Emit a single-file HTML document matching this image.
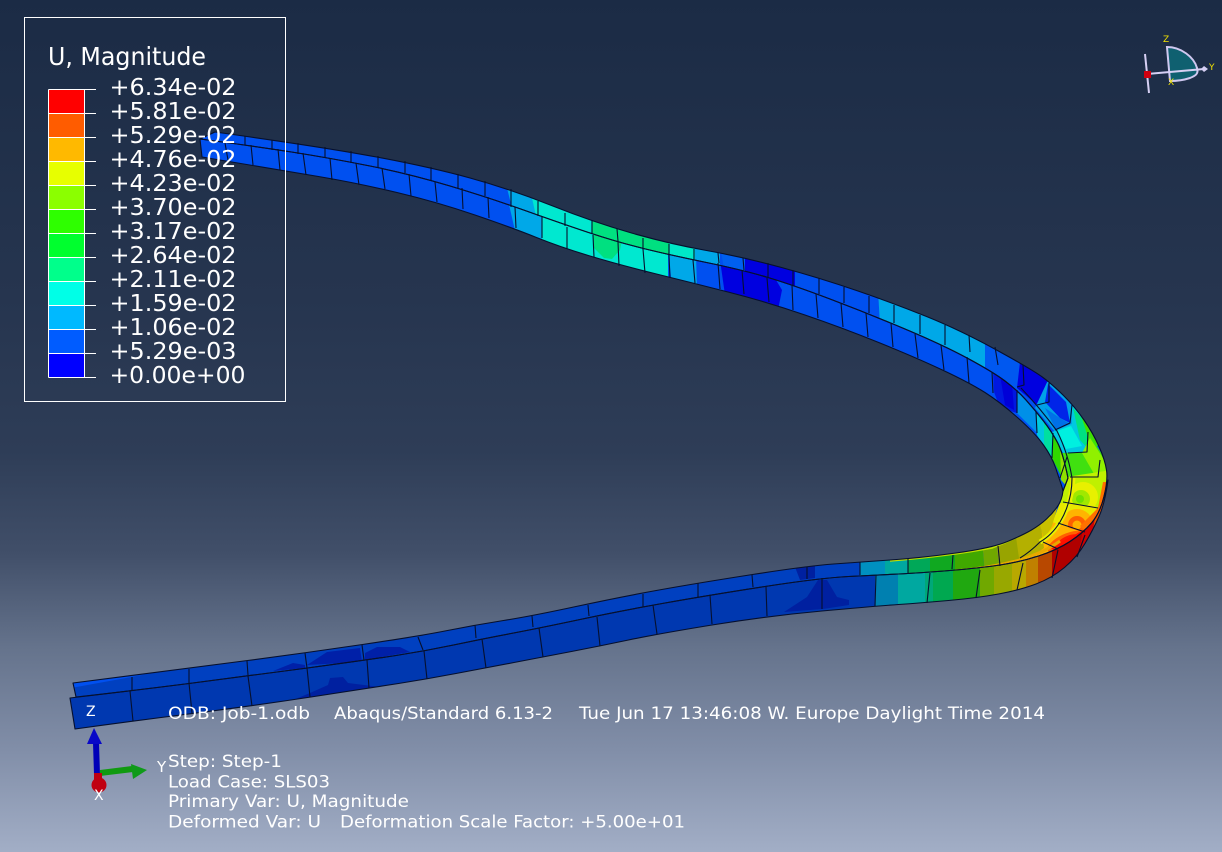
<!DOCTYPE html>
<html><head><meta charset="utf-8"><title>Abaqus U, Magnitude</title>
<style>html,body{margin:0;padding:0;background:#1b2b45;width:1222px;height:852px;overflow:hidden}svg{display:block}text{font-family:"DejaVu Sans","Liberation Sans",sans-serif;fill:#fff}</style>
</head><body>
<svg width="1222" height="852" viewBox="0 0 1222 852" xmlns="http://www.w3.org/2000/svg">
<defs>
<linearGradient id="bg" x1="0" y1="0" x2="0" y2="852" gradientUnits="userSpaceOnUse">
<stop offset="0" stop-color="#1b2b45"/><stop offset=".35" stop-color="#26354f"/><stop offset=".53" stop-color="#2e3d57"/><stop offset=".65" stop-color="#414f69"/><stop offset=".76" stop-color="#65738c"/><stop offset=".88" stop-color="#818ea8"/><stop offset="1" stop-color="#a2aec6"/>
</linearGradient>
<path id="pA" d="M215,132 Q323,147 376.5,157 Q430,167 470,178 Q510,189 551.5,205.5 Q593,222 631.5,233 Q670,244 706.5,250.5 Q743,257 781.5,267.5 Q820,278 856.5,290.5 Q893,303 926.5,316.5 Q960,330 996.5,350 Q1033,370 1043,377.5 Q1053,385 1064,396 Q1075,407 1084,420 Q1093,433 1099,446.5 Q1105,460 1106.5,470 Q1108,480 1104,496.5 Q1100,513 1091.5,523 Q1083,533 1070,541.5 Q1057,550 1038.5,556 Q1020,562 1000,565 Q980,568 950,570.5 Q920,573 898.5,574 Q877,575 848.5,576.5 Q820,578 765,586.5 Q710,595 665,603 Q620,611 580,619.5 Q540,628 511,633.5 Q482,639 453.5,645 Q425,651 396,655.5 Q367,660 307.5,668 Q248,676 189,683.5 Q130,691 76,697 L73,683 Q190,668 247.5,660.5 Q305,653 362.5,644.5 Q420,636 447.5,630.5 Q475,625 503.5,620.5 Q532,616 576,606.5 Q620,597 659,590 Q698,583 752.5,574.5 Q807,566 833.5,564 Q860,562 890,560 Q920,558 956,553 Q992,548 1007.5,541.5 Q1023,535 1031.5,530 Q1040,525 1046.5,519 Q1053,513 1057.5,506.5 Q1062,500 1063,491 L1068,478 Q1063,453 1057.5,442.5 Q1052,432 1043.5,421 Q1035,410 1026,400 Q1017,390 1005,381 Q993,372 968,358.5 Q943,345 905,329 Q867,313 830,299 Q793,285 768,277.5 Q743,270 706.5,262.5 Q670,255 643.5,248.5 Q617,242 588.5,232.5 Q560,223 525,210.5 Q490,198 450,186 Q410,174 370,166 Q330,158 291.5,152 Q253,146 200,139 Z"/>
<path id="pB" d="M200,139 Q253,146 291.5,152 Q330,158 370,166 Q410,174 450,186 Q490,198 525,210.5 Q560,223 588.5,232.5 Q617,242 643.5,248.5 Q670,255 706.5,262.5 Q743,270 768,277.5 Q793,285 830,299 Q867,313 905,329 Q943,345 968,358.5 Q993,372 1005,381 Q1017,390 1026,400 Q1035,410 1043.5,421 Q1052,432 1057.5,442.5 Q1063,453 1068,478 L1063,491 L1062,487 Q1059,478 1055.5,467.5 Q1052,457 1043.5,445 Q1035,433 1017.5,417.5 Q1000,402 985,392.5 Q970,383 943.5,370.5 Q917,358 880,343 Q843,328 805,315 Q767,302 730,292.5 Q693,283 656.5,274 Q620,265 590,256 Q560,247 536.5,237.5 Q513,228 475,215 Q437,202 397,192.5 Q357,183 318.5,176.5 Q280,170 202,157 Z"/>
<path id="pC" d="M70,698 Q130,691 189,683.5 Q248,676 307.5,668 Q367,660 396,655.5 Q425,651 453.5,645 Q482,639 511,633.5 Q540,628 580,619.5 Q620,611 665,603 Q710,595 765,586.5 Q820,578 848.5,576.5 Q877,575 898.5,574 Q920,573 950,570.5 Q980,568 1000,565 Q1020,562 1038.5,556 Q1057,550 1070,541.5 Q1083,533 1091.5,523 Q1100,513 1104,496.5 L1108,480 Q1105,503 1099,516.5 Q1093,530 1085,543.5 Q1077,557 1064.5,567.5 Q1052,578 1036,584 Q1020,590 998.5,594 Q977,598 948.5,600.5 Q920,603 898.5,604.5 Q877,606 822,611 Q767,616 712,625 Q657,634 628.5,640 Q600,646 571.5,651.5 Q543,657 514,662.5 Q485,668 456,673.5 Q427,679 398.5,683.5 Q370,688 311,697 Q252,706 192.5,713.5 Q133,721 75,729 Z"/>
<clipPath id="A"><use href="#pA"/></clipPath>
<clipPath id="B"><use href="#pB"/></clipPath>
<clipPath id="C"><use href="#pC"/></clipPath>
</defs>
<rect width="1222" height="852" fill="url(#bg)"/>

<!-- upper arm web -->
<g clip-path="url(#B)">
<rect x="190" y="120" width="890" height="380" fill="#0050f0"/>
<polygon points="508,200 542,210 542,245 516,235" fill="#00a8e8"/>
<polygon points="542,205 668,245 668,285 542,245" fill="#00e8d0"/>
<polygon points="593,232 622,240 620,250 612,259 604,258 594,248" fill="#00e080"/>
<polygon points="668,250 696,255 697,290 672,285" fill="#00a8e8"/>
<polygon points="720,260 770,270 782,290 778,310 725,295" fill="#0000e0"/>
<polygon points="993,372 1017,390 1017,413 1000,408 994,392" fill="#0018e0"/>
<polygon points="1000,375 1012,383 1014,410 1005,405" fill="#0000d8"/>
<polygon points="1017,388 1036,410 1037,433 1017,413" fill="#0090e8"/>
<polygon points="1036,410 1053,433 1053,460 1037,435" fill="#00c8e0"/>
<polygon points="1044,420 1053,433 1053,458 1044,445" fill="#00e0a0"/>
<polygon points="1053,433 1068,455 1068,490 1052,458" fill="#30d800"/>
<polygon points="1060,445 1070,455 1070,490 1061,480" fill="#90e000"/>
</g>

<!-- flange -->
<g clip-path="url(#A)">
<rect x="60" y="120" width="1060" height="590" fill="#0050f0"/>
<polygon points="505,180 528,180 545,230 515,220" fill="#00a8e8"/>
<polygon points="528,180 592,200 592,245 538,225" fill="#00e8d0"/>
<rect x="592" y="205" width="77" height="60" fill="#00e080"/>
<rect x="669" y="235" width="26" height="30" fill="#00e8c8"/>
<rect x="695" y="240" width="25" height="30" fill="#00a8e8"/>
<polygon points="720,245 745,245 745,275 725,275" fill="#0060f0"/>
<rect x="745" y="250" width="50" height="40" fill="#0000e0"/>
<polygon points="878,290 1003,340 1003,375 880,325" fill="#00a8e8"/>
<!-- curve chevrons -->
<polygon points="985,340 1040,360 1050,385 1040,405 985,372" fill="#0058f0"/>
<polygon points="1020,362 1050,380 1049,402 1037,405 1017,388" fill="#0000e0"/>
<polygon points="1049,378 1078,405 1072,425 1055,432 1035,408" fill="#00a0e8"/>
<polygon points="1048,384 1066,402 1070,423 1060,418 1045,402" fill="#0024e8"/>
<polygon points="1045,408 1060,418 1070,424 1056,430" fill="#0070e8"/>
<polygon points="1052,432 1072,424 1072,405 1095,433 1088,452 1063,453" fill="#00c8e0"/>
<polygon points="1057,431 1071,426 1082,446 1066,449" fill="#00f0e0"/>
<polygon points="1073,408 1095,433 1089,450 1080,440" fill="#00e080"/>
<polygon points="1080,412 1101,445 1091,447" fill="#40e000"/>
<polygon points="1062,453 1088,452 1088,432 1112,470 1098,479 1068,479" fill="#40e010"/>
<polygon points="1082,453 1090,438 1112,472 1097,479" fill="#90f000"/>
<polygon points="1066,477 1112,470 1110,510 1060,505" fill="#c0f000"/>
<circle cx="1083" cy="497" r="15" fill="#e8f000"/>
<circle cx="1081" cy="499" r="9" fill="#a0e800"/>
<circle cx="1080" cy="499" r="4" fill="#70e000"/>
<polygon points="1060,503 1110,508 1100,535 1050,528" fill="#e8e800"/>
<circle cx="1077" cy="525" r="16" fill="#ffb400"/>
<circle cx="1077" cy="525" r="9" fill="#ff6000"/>
<circle cx="1077" cy="525" r="4.5" fill="#ffb000"/>
<polygon points="1040,533 1052,522 1085,533 1062,552 1035,558" fill="#ffb400"/>
<ellipse cx="1066" cy="542" rx="20" ry="8" fill="#ff6000" transform="rotate(-25 1066 542)"/>
<ellipse cx="1068" cy="541" rx="12" ry="5" fill="#ff1800" transform="rotate(-25 1068 541)"/>
<polygon points="1103,482 1112,482 1106,510 1086,532 1080,526 1098,508" fill="#ff7000"/>
<polygon points="1087,528 1102,512 1098,522 1058,552 1050,548" fill="#ff1000"/>
<!-- lower arm flange -->
<polygon points="60,690 800,555 860,555 860,585 60,710" fill="#0040c0"/>
<rect x="860" y="555" width="25" height="25" fill="#0090c0"/>
<rect x="885" y="555" width="23" height="25" fill="#00a8a0"/>
<rect x="908" y="550" width="22" height="30" fill="#00a858"/>
<rect x="930" y="550" width="25" height="30" fill="#10a820"/>
<polygon points="955,545 982,540 985,575 955,578" fill="#40a800"/>
<polygon points="982,540 995,535 1000,572 985,575" fill="#70a800"/>
<polygon points="995,535 1015,530 1025,565 1000,572" fill="#98a400"/>
<polygon points="1015,530 1040,520 1044,548 1020,565" fill="#b4b000"/>
<polygon points="1040,525 1058,505 1052,526 1044,540" fill="#c8c000"/>
<path d="M955,571 Q990,568 1020,560 Q1045,552 1060,541" fill="none" stroke="#e8a800" stroke-width="3"/>
<path d="M1073,478 Q1072,502 1060,522 Q1052,535 1040,542" fill="none" stroke="#e8f000" stroke-width="5"/>
<path d="M890,561 Q950,556 992,548 Q1025,536 1050,516" fill="none" stroke="#c0e000" stroke-width="1.5"/>
<polygon points="795,567 815,565 815,578 800,580" fill="#0020a0"/>
<polygon points="273,671 293,663 305,665 305,668" fill="#0020a8"/>
<polygon points="307,665 327,652 360,648 362,662" fill="#0020a8"/>
<polygon points="365,653 377,647 400,647 410,652 365,660" fill="#0020a8"/>
</g>

<!-- lower arm web -->
<g clip-path="url(#C)">
<rect x="60" y="470" width="1060" height="270" fill="#0038b0"/>
<polygon points="784,612 807,597 818,580 827,580 837,597 849,600 849,605 823,609" fill="#0020a0"/>
<polygon points="293,700 310,693 310,698" fill="#0020a0"/>
<polygon points="310,693 328,685 330,678 343,677 348,683 380,687 310,698" fill="#0020a0"/>
<polygon points="875,570 900,570 898,610 875,610" fill="#0080b0"/>
<rect x="898" y="565" width="27" height="45" fill="#00a8a0"/>
<rect x="925" y="565" width="8" height="45" fill="#00a878"/>
<rect x="933" y="565" width="20" height="45" fill="#00a850"/>
<rect x="953" y="565" width="27" height="45" fill="#20a810"/>
<rect x="980" y="560" width="14" height="45" fill="#70a800"/>
<rect x="994" y="555" width="18" height="45" fill="#98a800"/>
<rect x="1012" y="550" width="14" height="50" fill="#b8a800"/>
<rect x="1026" y="545" width="12" height="55" fill="#c08000"/>
<rect x="1038" y="540" width="14" height="55" fill="#b84800"/>
<polygon points="1052,520 1120,470 1120,600 1052,590" fill="#b00000"/>
<polygon points="1085,520 1120,460 1120,560 1077,560" fill="#d00000"/>
<polygon points="1098,500 1115,465 1115,490 1093,530" fill="#e05000"/>
</g>

<!-- mesh lines -->
<g fill="none" stroke="#06102e" stroke-width="1.1" stroke-linejoin="round">
<path d="M225,143L228,160M251,145L253,165M278,149L280,170M303,153L306,175M330,158L332,180M356,163L359,185M382,168L385,189M409,174L411,196M435,182L437,202M462,188L463,209M488,197L489,218M515,207L516,228M542,217L542,238M567,227L567,249M593,235L594,257M618,242L619,266M643,249L645,273M669,255L670,278M693,260L695,283M718,263L720,289M742,270L744,294M767,278L769,302M792,285L793,310M816,294L818,318M841,303L843,327M866,313L868,337M891,323L893,347M915,334L918,358M941,345L944,370M967,357L969,383M992,372L993,393M1017,390L1017,413M1036,412L1037,433M1053,433L1052,458M1067,457L1060,478"/>
<path d="M245,136L245,145M272,140L272,150M298,143L298,154M325,147L325,158M351,151L351,163M378,156L378,168M405,161L405,173M431,167L431,181M458,174L458,188M485,181L485,196M511,189L511,207M538,201L538,216M565,213L565,226M592,220L592,234M617,229L618,241M643,238L643,250M669,244L669,255M694,249L694,260M718,253L719,263M743,258L744,270M768,263L768,278M793,270L793,285M819,278L819,294M844,287L844,303M869,296L869,313M894,305L894,323M920,315L920,334M945,325L945,345M969,335L970,352M995,347L998,365"/>
<path d="M1023,365L1024,385L1017,387M1049,383L1049,402L1037,405M1072,405L1070,423L1055,430M1088,432L1087,452L1068,453M1100,460L1098,477L1070,477M1063,502L1098,508M1058,523L1085,532M1043,542L1058,549"/>
<path d="M930,573L927,603M980,570L976,598M1023,563L1017,590M1058,550L1052,578M1085,535L1077,557M876,575L875,606M822,578L822,609M766,587L767,616M710,595L712,624M653,605L657,634M597,617L600,646M539,628L543,657M482,639L486,668M424,651L427,679M367,660L369,688M307,668L310,697M248,676L252,706M189,683L192,713M130,691L133,721"/>
<path d="M132,677L132,690M189,669L189,683M247,661L248,675M305,653L307,668M362,645L364,660M418,637L423,650M475,625L476,638M532,616L533,627M588,605L589,616M643,594L643,607M698,583L698,597M752,575L753,587M807,567L807,579M860,562L860,575M908,559L908,573M953,555L952,569M998,546L1000,566"/>
<path d="M1021,388Q1040,408 1057,431Q1068,453 1072,478Q1072,502 1060,522Q1052,535 1040,542Q1030,552 1020,558"/>
<use href="#pA"/><use href="#pB"/><use href="#pC"/>
</g>

<!-- legend -->
<rect x="24.5" y="17.5" width="261" height="384" fill="none" stroke="#fff"/>
<rect x="49" y="90" width="35" height="23" fill="#ff0000"/><rect x="49" y="114" width="35" height="23" fill="#ff5c00"/><rect x="49" y="138" width="35" height="23" fill="#ffb900"/><rect x="49" y="162" width="35" height="23" fill="#e7ff00"/><rect x="49" y="186" width="35" height="23" fill="#8bff00"/><rect x="49" y="210" width="35" height="23" fill="#2eff00"/><rect x="49" y="234" width="35" height="23" fill="#00ff2e"/><rect x="49" y="258" width="35" height="23" fill="#00ff8b"/><rect x="49" y="282" width="35" height="23" fill="#00ffe7"/><rect x="49" y="306" width="35" height="23" fill="#00b9ff"/><rect x="49" y="330" width="35" height="23" fill="#005cff"/><rect x="49" y="354" width="35" height="23" fill="#0000ff"/>
<path d="M48.5,89.5H96M48.5,113.5H96M48.5,137.5H96M48.5,161.5H96M48.5,185.5H96M48.5,209.5H96M48.5,233.5H96M48.5,257.5H96M48.5,281.5H96M48.5,305.5H96M48.5,329.5H96M48.5,353.5H96M48.5,377.5H96M48.5,89.5V377.5M84.5,89.5V377.5" fill="none" stroke="#fff"/>
<text x="48" y="65" font-size="24.5" textLength="158" lengthAdjust="spacingAndGlyphs">U, Magnitude</text>
<g font-size="23">
<text x="109.5" y="95" textLength="127" lengthAdjust="spacingAndGlyphs">+6.34e-02</text>
<text x="109.5" y="119" textLength="127" lengthAdjust="spacingAndGlyphs">+5.81e-02</text>
<text x="109.5" y="143" textLength="127" lengthAdjust="spacingAndGlyphs">+5.29e-02</text>
<text x="109.5" y="167" textLength="127" lengthAdjust="spacingAndGlyphs">+4.76e-02</text>
<text x="109.5" y="191" textLength="127" lengthAdjust="spacingAndGlyphs">+4.23e-02</text>
<text x="109.5" y="215" textLength="127" lengthAdjust="spacingAndGlyphs">+3.70e-02</text>
<text x="109.5" y="239" textLength="127" lengthAdjust="spacingAndGlyphs">+3.17e-02</text>
<text x="109.5" y="263" textLength="127" lengthAdjust="spacingAndGlyphs">+2.64e-02</text>
<text x="109.5" y="287" textLength="127" lengthAdjust="spacingAndGlyphs">+2.11e-02</text>
<text x="109.5" y="311" textLength="127" lengthAdjust="spacingAndGlyphs">+1.59e-02</text>
<text x="109.5" y="335" textLength="127" lengthAdjust="spacingAndGlyphs">+1.06e-02</text>
<text x="109.5" y="359" textLength="127" lengthAdjust="spacingAndGlyphs">+5.29e-03</text>
<text x="109.5" y="383" textLength="136" lengthAdjust="spacingAndGlyphs">+0.00e+00</text>
</g>

<!-- triad bottom-left -->
<polygon points="93,743 99,743 100,775 94,775" fill="#0000b8"/>
<polygon points="94,728 87,744 102,744" fill="#0808c8"/>
<polygon points="100,770 132,766 133,772 100,776" fill="#109a10"/>
<polygon points="131,764 147,770 133,779" fill="#0f9a1a"/>
<rect x="94" y="773" width="8" height="7" fill="#c00010"/>
<circle cx="99" cy="785" r="7.5" fill="#c00010"/>
<text x="86" y="716" font-size="14">Z</text>
<text x="94" y="800" font-size="14">X</text>
<text x="157" y="772" font-size="15">Y</text>

<!-- status text -->
<g font-size="17">
<text x="168" y="719" textLength="142" lengthAdjust="spacingAndGlyphs">ODB: Job-1.odb</text>
<text x="334" y="719" textLength="219" lengthAdjust="spacingAndGlyphs">Abaqus/Standard 6.13-2</text>
<text x="579" y="719" textLength="466" lengthAdjust="spacingAndGlyphs">Tue Jun 17 13:46:08 W. Europe Daylight Time 2014</text>
<text x="168" y="767" textLength="114" lengthAdjust="spacingAndGlyphs">Step: Step-1</text>
<text x="168" y="787.5" textLength="162" lengthAdjust="spacingAndGlyphs">Load Case: SLS03</text>
<text x="168" y="807" textLength="241" lengthAdjust="spacingAndGlyphs">Primary Var: U, Magnitude</text>
<text x="168" y="827.5" textLength="153" lengthAdjust="spacingAndGlyphs">Deformed Var: U</text>
<text x="340" y="827.5" textLength="345" lengthAdjust="spacingAndGlyphs">Deformation Scale Factor: +5.00e+01</text>
</g>

<!-- triad top-right -->
<path d="M1167,47C1181,47 1194,57 1197,68C1199,74 1195,76 1190,78C1184,80 1177,81 1170,81Z" fill="#0f6070" stroke="#cfc8f0" stroke-width="2"/>
<path d="M1147,74L1204,69M1145,54L1149,93" fill="none" stroke="#d6d0f4" stroke-width="2"/>
<polygon points="1204,66 1208,69 1204,72 1201,69" fill="#d6d0f4"/>
<rect x="1144" y="71" width="7" height="7" fill="#d00010"/>
<g style="font-size:9px"><text x="1163" y="42" style="fill:#f0e000">Z</text><text x="1209" y="70" style="fill:#f0e000">Y</text><text x="1168" y="85" style="fill:#f0e000">X</text></g>
</svg>
</body></html>
